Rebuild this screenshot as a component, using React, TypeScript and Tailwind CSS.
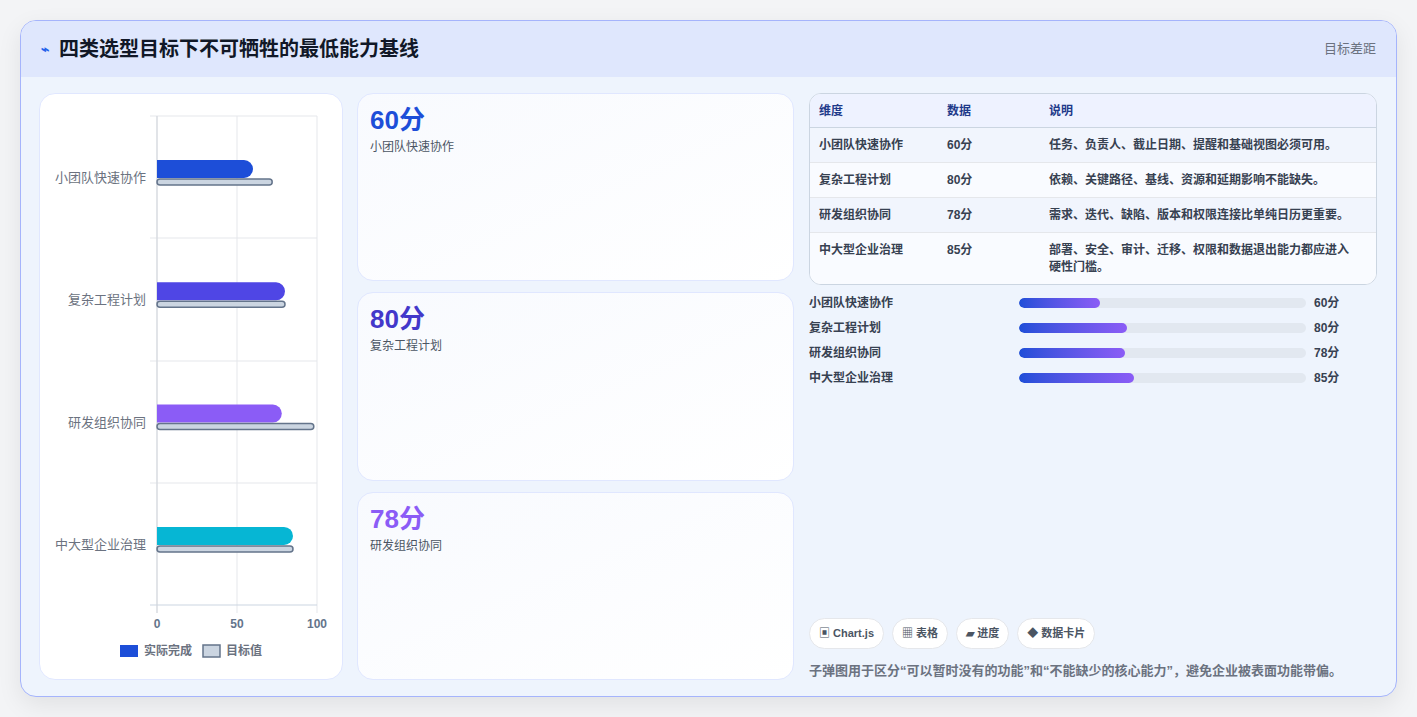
import React from 'react'

const rows = [
  { name: '小团队快速协作', v: 60, t: 72, color: '#1d4ed8', note: '任务、负责人、截止日期、提醒和基础视图必须可用。', bar: 81 },
  { name: '复杂工程计划', v: 80, t: 80, color: '#4f46e5', note: '依赖、关键路径、基线、资源和延期影响不能缺失。', bar: 108 },
  { name: '研发组织协同', v: 78, t: 98, color: '#8b5cf6', note: '需求、迭代、缺陷、版本和权限连接比单纯日历更重要。', bar: 106 },
  { name: '中大型企业治理', v: 85, t: 85, color: '#06b6d4', note: '部署、安全、审计、迁移、权限和数据退出能力都应进入硬性门槛。', bar: 115 },
]

const cards = [
  { v: '60分', label: '小团队快速协作', color: 'text-[#1d4ed8]' },
  { v: '80分', label: '复杂工程计划', color: 'text-[#4338ca]' },
  { v: '78分', label: '研发组织协同', color: 'text-[#8b5cf6]' },
]

const Chart = () => {
  // plot: x 117..277 in card coords, y 22..511
  const x0 = 117
  const sx = 1.6
  return (
    <svg width="303" height="585" className="block" fontFamily="Liberation Sans, Noto Sans CJK SC, sans-serif">
      {[0, 50, 100].map((g) => (
        <line key={g} x1={x0 + g * sx} y1={22} x2={x0 + g * sx} y2={519} stroke="#e5e7eb" strokeWidth={1} />
      ))}
      {[22, 144, 267, 389].map((y) => (
        <line key={y} x1={110} y1={y} x2={277} y2={y} stroke="#e5e7eb" strokeWidth={1} />
      ))}
      <line x1={110} y1={511} x2={277} y2={511} stroke="#cbd5e1" strokeWidth={1} />
      <line x1={x0} y1={22} x2={x0} y2={519} stroke="#d1d5db" strokeWidth={1} />
      {rows.map((r, i) => {
        const cy = 84 + i * 122.3
        return (
          <g key={r.name}>
            <text x={106} y={cy + 4} textAnchor="end" fontSize="13" fill="#6b7280">{r.name}</text>
            <path d={`M${x0} ${cy - 18}H${x0 + r.v * sx - 9}a9 9 0 0 1 9 9v0a9 9 0 0 1 -9 9H${x0}Z`} fill={r.color} />
            <rect x={x0} y={cy + 1} width={r.t * sx} height={6} rx={3} fill="#cbd5e1" stroke="#64748b" strokeWidth={1.5} />
          </g>
        )
      })}
      {[0, 50, 100].map((g) => (
        <text key={g} x={x0 + g * sx} y={534} textAnchor="middle" fontSize="12" fontWeight="700" fill="#64748b">{g}</text>
      ))}
      <rect x={80} y={551} width={18} height={12} fill="#1d4ed8" />
      <text x={104} y={561} fontSize="12" fontWeight="700" fill="#6b7280">实际完成</text>
      <rect x={163} y={551} width={17} height={12} fill="#cbd5e1" stroke="#64748b" strokeWidth={1.5} />
      <text x={186} y={561} fontSize="12" fontWeight="700" fill="#6b7280">目标值</text>
    </svg>
  )
}

export default function App() {
  return (
    <div className="w-[1417px] h-[717px] bg-[#f3f4f6] p-5 font-[Liberation_Sans,Noto_Sans_CJK_SC,sans-serif]">
      <div className="h-[677px] rounded-2xl border border-[#a5b4fc] bg-[#eef4fd] overflow-hidden flex flex-col shadow-[0_8px_24px_rgba(0,0,0,0.08)]">
        <div className="h-[56px] shrink-0 bg-[#dfe7fd] flex items-center justify-between px-5">
          <div className="flex items-center gap-[10px]">
            <span className="text-[#2563eb] text-sm font-bold">⌁</span>
            <h1 className="text-[20px] font-bold text-[#111827]">四类选型目标下不可牺牲的最低能力基线</h1>
          </div>
          <span className="text-[13px] text-[#6b7280]">目标差距</span>
        </div>
        <div className="flex-1 flex gap-[14px] pl-[18px] pr-[19px] pt-[16px] pb-[18px]">
          <div className="w-[304px] bg-white rounded-2xl border border-[#e0e7ff]">
            <Chart />
          </div>
          <div className="w-[437px] flex flex-col gap-[11px]">
            {cards.map((c) => (
              <div key={c.v} className="flex-1 rounded-2xl border border-[#e0e7ff] bg-gradient-to-br from-[#f8fafe] to-white px-3 pt-2">
                <div className={`text-[26px] font-bold leading-9 ${c.color}`}>{c.v}</div>
                <div className="text-[12px] text-[#4b5563]">{c.label}</div>
              </div>
            ))}
          </div>
          <div className="flex-1 flex flex-col pl-[1px]">
            <div className="rounded-xl border border-[#cbd5e1] overflow-hidden bg-white text-[12px] font-semibold text-[#374151]">
              <div className="flex h-[34px] items-center bg-[#eef2ff] text-[#1e3a8a] border-b border-[#cbd5e1]">
                <div className="w-[137px] pl-[9px]">维度</div>
                <div className="w-[102px]">数据</div>
                <div>说明</div>
              </div>
              {rows.map((r, i) => (
                <div key={r.name} className={`flex pt-[9px] pb-[8px] leading-[17px] ${i < 3 ? 'border-b border-[#e5e7eb]' : ''} ${i % 2 === 0 ? 'bg-[#f1f5fd]' : 'bg-[#f9fbff]'}`}>
                  <div className="w-[137px] pl-[9px] shrink-0">{r.name}</div>
                  <div className="w-[102px] shrink-0">{r.v}分</div>
                  <div className="pr-5">{r.note}</div>
                </div>
              ))}
            </div>
            <div className="flex flex-col gap-[7px] mt-[9px]">
              {rows.map((r) => (
                <div key={r.name} className="flex items-center h-[18px] text-[12px] font-semibold text-[#374151]">
                  <div className="w-[210px]">{r.name}</div>
                  <div className="w-[287px] h-[10px] rounded-full bg-[#e2e8f0] overflow-hidden">
                    <div className="h-full rounded-full bg-gradient-to-r from-[#1d4ed8] to-[#8b5cf6]" style={{ width: r.bar }} />
                  </div>
                  <div className="ml-2">{r.v}分</div>
                </div>
              ))}
            </div>
            <div className="mt-auto flex gap-2 text-[11px] font-semibold text-[#4b5563]">
              {['▣ Chart.js', '▦ 表格', '▰ 进度', '◆ 数据卡片'].map((t) => (
                <span key={t} className="px-[9px] py-[6px] rounded-full bg-white border border-[#e5e7eb]">{t}</span>
              ))}
            </div>
            <p className="mt-[12px] text-[13px] text-[#6b7280] font-semibold">子弹图用于区分“可以暂时没有的功能”和“不能缺少的核心能力”，避免企业被表面功能带偏。</p>
          </div>
        </div>
      </div>
    </div>
  )
}
